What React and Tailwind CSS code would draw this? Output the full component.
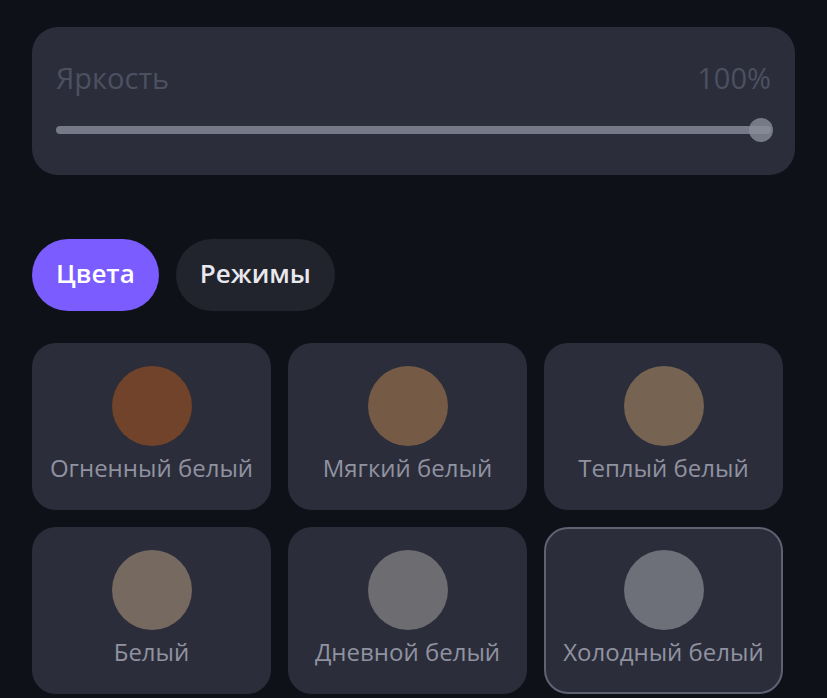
import { useState } from "react";

const colors = [
  { name: "Огненный белый", swatch: "bg-[#71432a]" },
  { name: "Мягкий белый", swatch: "bg-[#755a46]" },
  { name: "Теплый белый", swatch: "bg-[#766352]" },
  { name: "Белый", swatch: "bg-[#766a60]" },
  { name: "Дневной белый", swatch: "bg-[#6d6c70]" },
  { name: "Холодный белый", swatch: "bg-[#6e7079]" },
];

export default function App() {
  const [tab, setTab] = useState("colors");
  const [selected, setSelected] = useState(5);

  return (
    <div className="w-[827px] h-[698px] overflow-hidden bg-[#0f1119] px-8 pt-[27px] font-['Open_Sans',sans-serif]">
      {/* яркость */}
      <div className="w-[763px] h-[148px] rounded-[26px] bg-[#2b2d3b] px-6 pt-[31px]">
        <div className="flex justify-between items-center text-[29px] leading-[40px] font-medium text-[#4d5061]">
          <span>Яркость</span>
          <span className="font-normal">100%</span>
        </div>
        <div className="relative mt-[28px] h-[8px] rounded-full bg-[#767988]">
          <div className="absolute right-[-2px] top-[-8px] w-6 h-6 rounded-full bg-[#8a8d9a]/80" />
        </div>
      </div>

      {/* вкладки */}
      <div className="flex gap-[17px] mt-16">
        <button
          onClick={() => setTab("colors")}
          className={`h-[72px] px-6 pb-1 rounded-full text-[26px] font-semibold ${tab === "colors" ? "bg-[#7b5cff] text-white" : "bg-[#22242d] text-[#e8e8ee]"}`}
        >Цвета</button>
        <button
          onClick={() => setTab("modes")}
          className={`h-[72px] px-6 pb-1 rounded-full text-[26px] font-semibold ${tab === "modes" ? "bg-[#7b5cff] text-white" : "bg-[#22242d] text-[#e8e8ee]"}`}
        >Режимы</button>
      </div>

      {/* цвета */}
      <div className="grid grid-cols-[239px_239px_239px] gap-x-[17px] gap-y-[17px] mt-[32px]">
        {colors.map((c, i) => (
          <button
            key={c.name}
            onClick={() => setSelected(i)}
            className={`h-[167px] rounded-[24px] bg-[#2b2d3a] flex flex-col items-center pt-[21px] border-2 ${selected === i ? "border-[#5f6273]" : "border-transparent"}`}
          >
            <div className={`w-20 h-20 rounded-full ${c.swatch}`} />
            <div className="mt-[6px] text-[24px] leading-[32px] text-[#9092a0] whitespace-nowrap">{c.name}</div>
          </button>
        ))}
      </div>
    </div>
  );
}
